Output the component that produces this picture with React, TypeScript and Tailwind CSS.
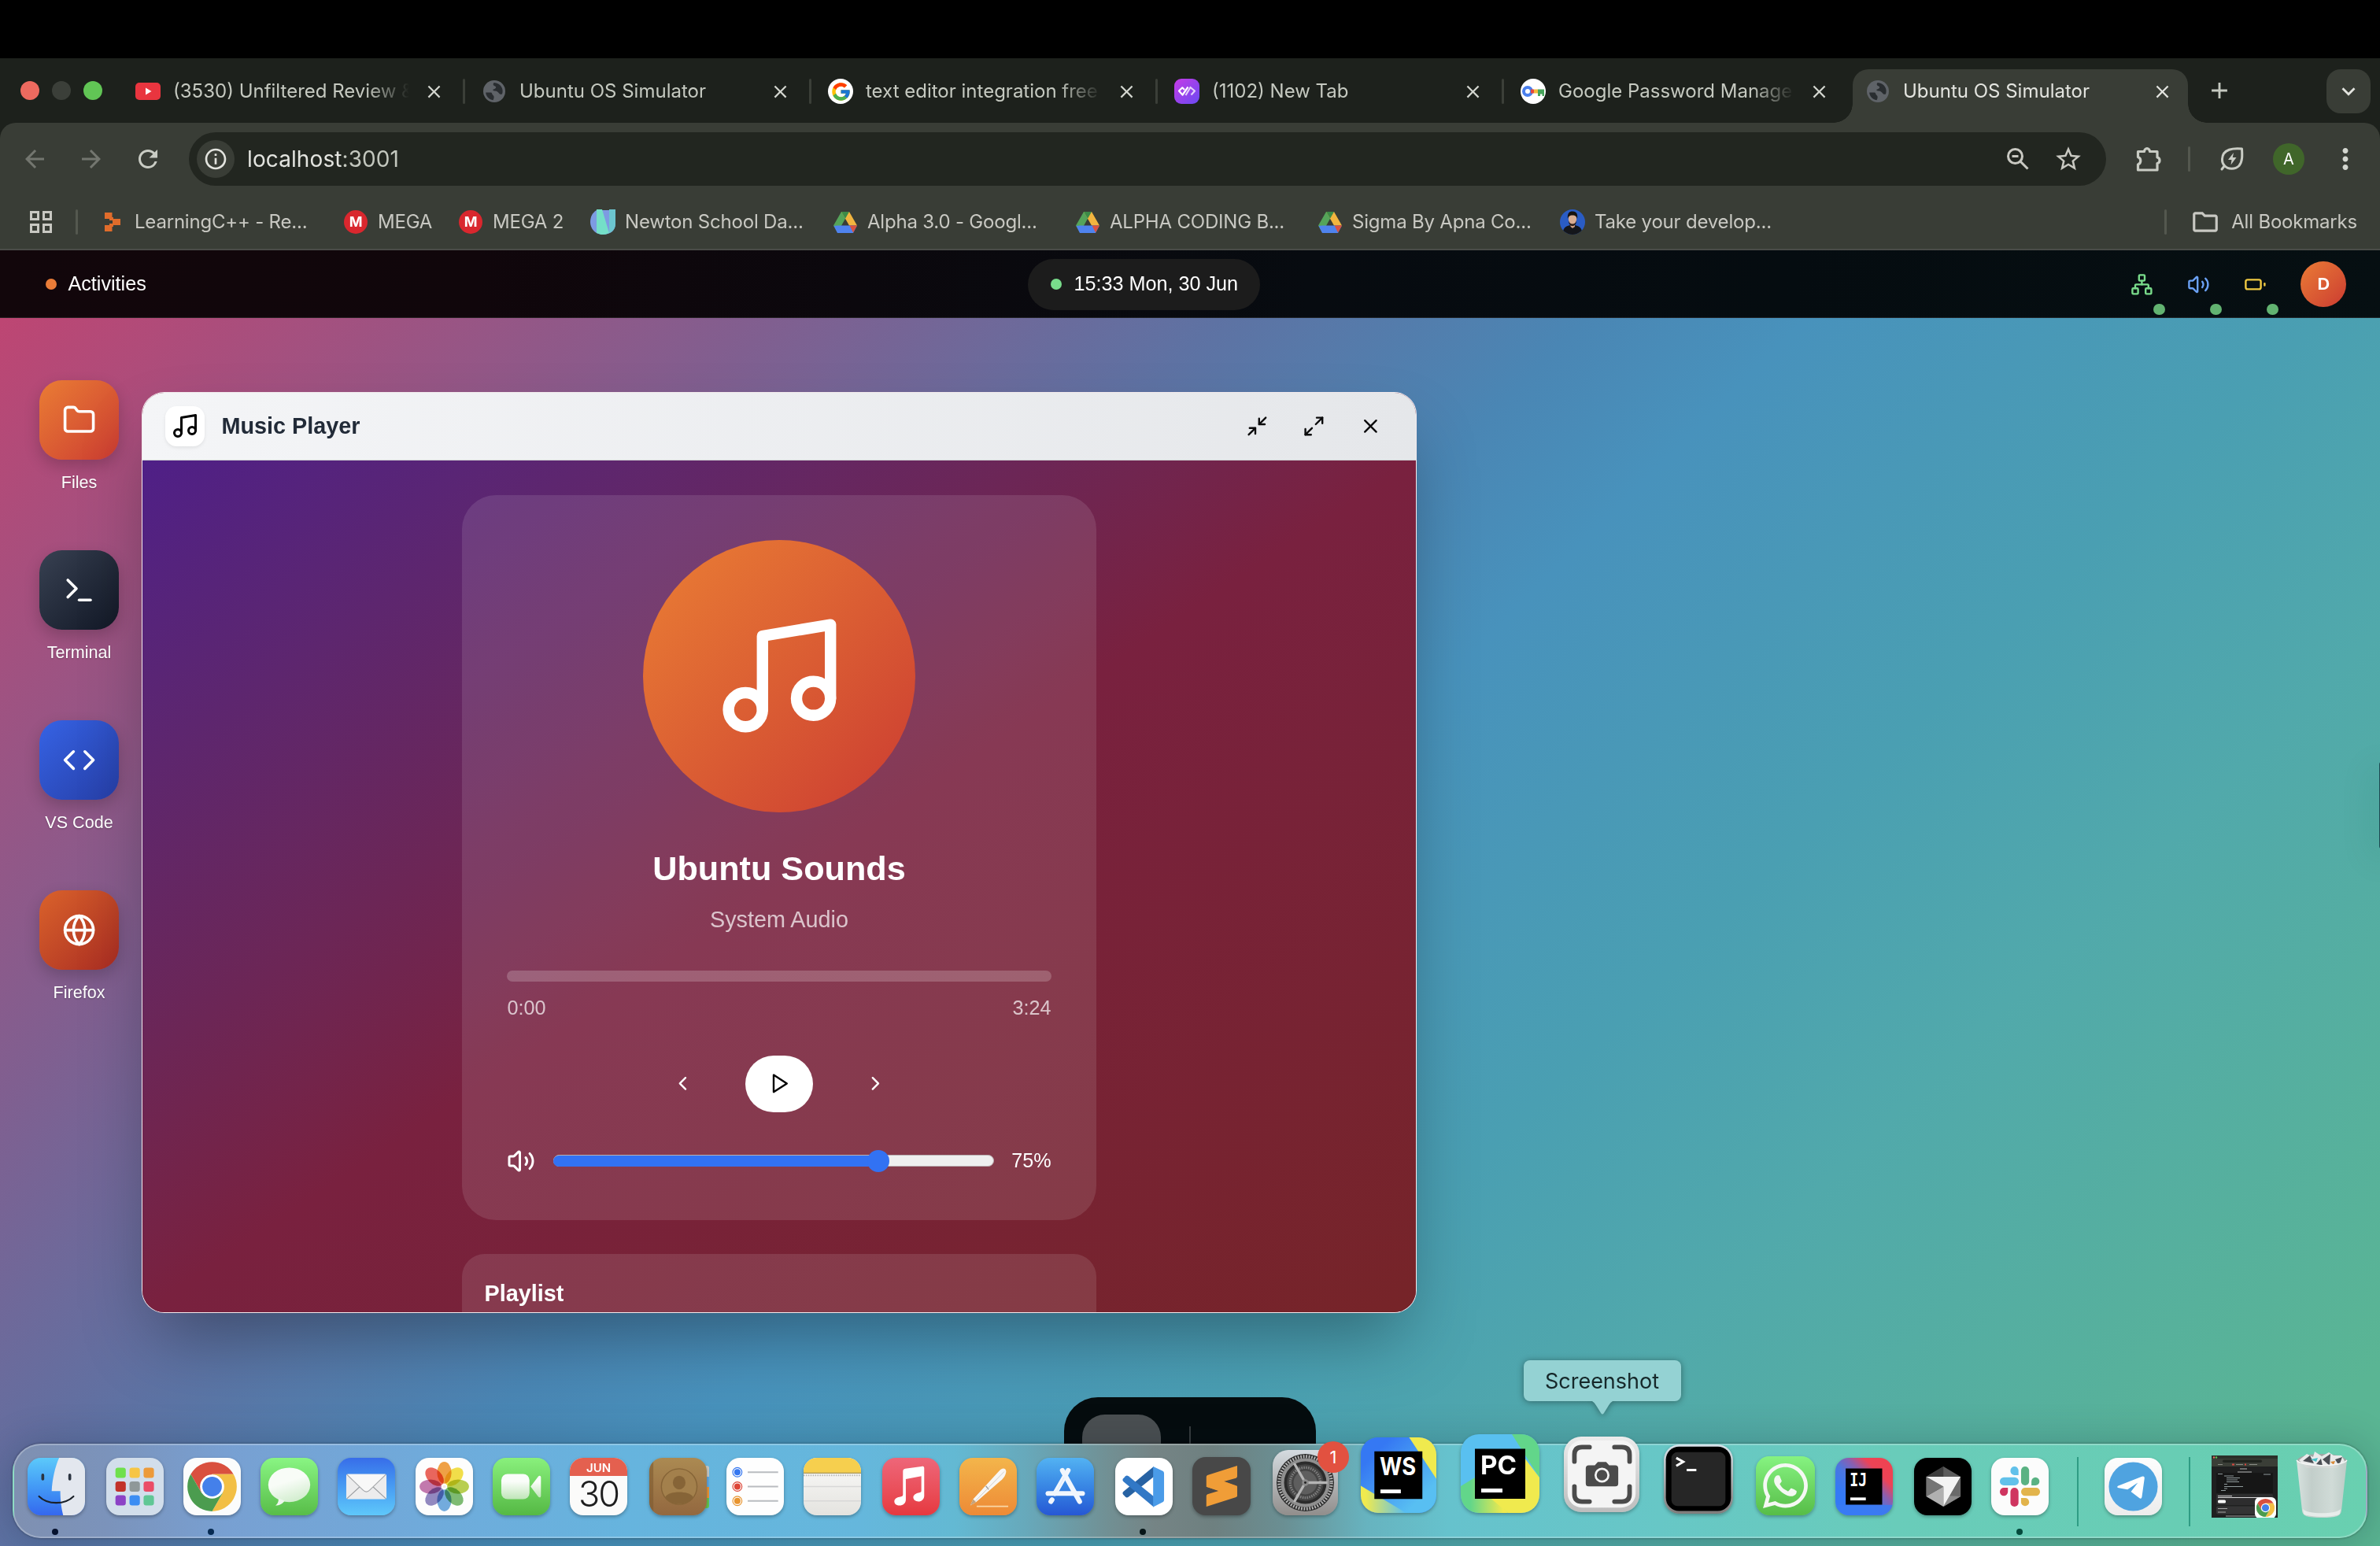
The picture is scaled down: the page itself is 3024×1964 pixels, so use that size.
import React from "react";
import {
  Code,
  Folder,
  Globe,
  Maximize2,
  Minimize2,
  Music,
  Network,
  Terminal,
  Volume2,
  X,
} from "lucide-react";
import { FcGoogle } from "react-icons/fc";
import { FaWhatsapp } from "react-icons/fa";
import {
  MdAdd,
  MdArrowBack,
  MdArrowForward,
  MdClose,
  MdExpandMore,
  MdMoreVert,
  MdOutlineFolder,
  MdOutlineInfo,
  MdRefresh,
  MdStarBorder,
  MdZoomOut,
} from "react-icons/md";

type Kids = { children?: React.ReactNode };

/* ---------- Browser favicons ---------- */

const YouTubeIcon = () => (
  <svg width="32" height="22" viewBox="0 0 32 22">
    <rect width="32" height="22" rx="5" fill="#e9353f" />
    <path d="M13 6.5 L20.5 11 L13 15.5 Z" fill="#fff" />
  </svg>
);

const WorldIcon = () => (
  <svg width="28" height="28" viewBox="0 0 28 28">
    <circle cx="14" cy="14" r="14" fill="#5f6368" />
    <path
      d="M3.2 15.5 L9.5 15.5 C11.5 15.5 11 18 12.5 19 C14 20 14 22.5 12.5 25.2 C7 24.5 3.4 20 3.2 15.5 Z M13.5 3 C12 5 12.5 6.5 15 7.5 C17.5 8.5 15.5 11 13 11.5 C11.5 12 12.5 13.5 15 13.5 C18 13.5 19 15.5 20.5 17 C21.5 18 23 18 24 17.5 C26.500 11 22 3.500 13.500 3 Z"
      fill="#23272a"
      opacity="0.9"
    />
  </svg>
);

const GoogleIcon = () => (
  <span className="flex size-[32px] items-center justify-center rounded-full bg-white">
    <FcGoogle size={27} />
  </span>
);

const DailyIcon = () => (
  <svg width="32" height="32" viewBox="0 0 32 32">
    <defs>
      <linearGradient id="daily" x1="0" y1="0" x2="1" y2="1">
        <stop offset="0" stopColor="#c63be6" />
        <stop offset="1" stopColor="#6a4af2" />
      </linearGradient>
    </defs>
    <rect width="32" height="32" rx="9" fill="url(#daily)" />
    <path d="M17.500 10.500 L10.500 20.500 L6 15.500 L10.300 11.300 L13 14" fill="none" stroke="#fff" strokeWidth="2.200" strokeLinejoin="round" />
    <path d="M14.500 21 L20.500 11 L26 15.500 L21.500 20.500" fill="none" stroke="#fff" strokeOpacity=".75" strokeWidth="2.200" strokeLinejoin="round" />
  </svg>
);

const KeyIcon = () => (
  <svg width="32" height="32" viewBox="0 0 32 32">
    <circle cx="16" cy="16" r="16" fill="#fff" />
    <circle cx="9" cy="16" r="5" fill="none" stroke="#4a80ee" strokeWidth="4" />
    <rect x="13" y="13.500" width="4" height="5" fill="#e5483b" />
    <rect x="17" y="13.500" width="5" height="5" fill="#f3b93c" />
    <path d="M22 13.500 H30 V22 H27.500 V19.500 H25 V22 H22 Z" fill="#46a45a" />
  </svg>
);

const DriveIcon = () => (
  <svg width="30" height="27" viewBox="0 0 30 27">
    <path d="M10 0 H20 L15 8.800 L5.200 26.400 L0 17.600 Z" fill="#55a45a" />
    <path d="M10 0 H20 L30 17.600 H20 Z" fill="#f2b53f" />
    <path d="M5.200 17.600 H24.800 L29.700 18 L25 27 H5 L0.500 18 Z" fill="#4f83ee" />
    <path d="M20.500 17.600 H30 L25 26.500 Z" fill="#dc5140" />
    <path d="M10 0 H20 L15 8.800 Z" fill="#3c8a47" />
  </svg>
);

const LearnIcon = () => (
  <svg width="20" height="24" viewBox="0 0 20 24" fill="#e06c2b">
    <rect x="0" y="0" width="9.500" height="8" />
    <rect x="10" y="8" width="10" height="8" />
    <rect x="0" y="16" width="9.500" height="8" />
    <rect x="6" y="6" width="5" height="4" />
    <rect x="6" y="14" width="5" height="4" />
  </svg>
);

const MegaIcon = () => (
  <span className="flex size-[30px] items-center justify-center rounded-full bg-[#d9272e] font-['Inter'] text-[18px] leading-none font-bold text-white">
    M
  </span>
);

const NewtonIcon = () => (
  <svg width="32" height="32" viewBox="0 0 32 32">
    <path d="M8 1 H32 V18 C32 27 25 32 16 32 C7 32 0 25 0 16 C0 9 3 4 8 1 Z" fill="#7d9be2" />
    <path d="M8 0 H15 L24 30 C21 31 19 32 16 32 C13 32 11 31 8 30 Z" fill="#74dfc8" />
    <path d="M24 0 H32 V18 C32 24 29 28 24 30 Z" fill="#6cc5cf" />
  </svg>
);

const PersonIcon = () => (
  <svg width="32" height="32" viewBox="0 0 32 32">
    <defs>
      <clipPath id="person">
        <circle cx="16" cy="16" r="16" />
      </clipPath>
    </defs>
    <g clipPath="url(#person)">
      <rect width="32" height="32" fill="#2a5cc4" />
      <path d="M3 32 C4 22 9 20 16 20 C23 20 28 22 29 32 Z" fill="#14161b" />
      <path d="M13.500 17 H19 V22 L16 24 L13.500 22 Z" fill="#c99b80" />
      <ellipse cx="16" cy="12" rx="5.200" ry="7" fill="#d9ad92" />
      <path d="M10 12 C9 4 13 2 16.500 2.500 C21 2.500 23 6 22 12 C21 9 20 7.500 16 7.500 C12 7.500 11 9 10 12 Z" fill="#17120f" />
      <path d="M11 14 C12 20 20 20 21 14 C21 20 18 21 16 21 C14 21 11 20 11 14 Z" fill="#2b1d17" />
    </g>
  </svg>
);

/* ---------- Browser chrome ---------- */

function Tab({ icon, title, fade, divider = true }: { icon: React.ReactNode; title: string; fade?: boolean; divider?: boolean }) {
  return (
    <div className="flex h-[56px] w-[440px] shrink-0 items-center pl-[21px]">
      <span className="flex w-[32px] shrink-0 justify-center">{icon}</span>
      <span
        className={
          fade
            ? "ml-[16px] w-[301px] leading-[32px] whitespace-nowrap [mask-image:linear-gradient(to_right,black_245px,transparent_300px)]"
            : "ml-[16px] w-[301px] leading-[32px] whitespace-nowrap"
        }
      >
        {title}
      </span>
      <MdClose size={27} className="ml-[17px] shrink-0 text-[#d3d6cf]" />
      {divider && <span className="ml-auto h-[32px] w-[3px] rounded-full bg-[#3b3f38]" />}
    </div>
  );
}

function TabStrip() {
  return (
    <div className="flex h-[82px] bg-[#1d211c] pt-[14px] font-['Inter',sans-serif] text-[24px] leading-none text-[#c5c9c0]">
      <div className="flex h-[54px] w-[151px] shrink-0 items-center gap-[16px] pl-[26px]">
        <span className="size-[24px] rounded-full bg-[#ed6a5f]" />
        <span className="size-[24px] rounded-full bg-[#3b3f39]" />
        <span className="size-[24px] rounded-full bg-[#61c555]" />
      </div>
      <Tab icon={<YouTubeIcon />} title="(3530) Unfiltered Review &amp;" fade />
      <Tab icon={<WorldIcon />} title="Ubuntu OS Simulator" />
      <Tab icon={<GoogleIcon />} title="text editor integration free" fade />
      <Tab icon={<DailyIcon />} title="(1102) New Tab" />
      <Tab icon={<KeyIcon />} title="Google Password Manager" fade divider={false} />
      <div className="relative ml-[3px] flex h-[68px] w-[426px] shrink-0 items-center rounded-t-[20px] bg-[#393d36] pb-[12px] pl-[18px] text-[#e3e4df]">
        <span className="absolute bottom-0 -left-[24px] size-[24px] bg-[radial-gradient(circle_at_0_0,transparent_23.500px,#393d36_24px)]" />
        <span className="absolute -right-[24px] bottom-0 size-[24px] bg-[radial-gradient(circle_at_100%_0,transparent_23.500px,#393d36_24px)]" />
        <WorldIcon />
        <span className="ml-[18px] w-[301px] leading-[32px]">Ubuntu OS Simulator</span>
        <MdClose size={27} className="ml-[15px]" />
      </div>
      <div className="flex h-[54px] items-center pl-[23px] text-[#c5c9c0]">
        <MdAdd size={34} />
      </div>
      <div className="mr-[12px] ml-auto flex size-[56px] items-center justify-center rounded-[18px] bg-[#393d36] text-[#e3e4df]">
        <MdExpandMore size={34} />
      </div>
    </div>
  );
}

function Toolbar() {
  return (
    <div className="flex h-[92px] items-center text-[#c5c9c0]">
      <div className="flex w-[240px] shrink-0 items-center gap-[36px] pl-[26px]">
        <MdArrowBack size={36} className="text-[#73766f]" />
        <MdArrowForward size={36} className="text-[#73766f]" />
        <MdRefresh size={36} className="text-[#c9ccc4]" />
      </div>
      <div className="flex h-[68px] w-[2436px] shrink-0 items-center rounded-full bg-[#222620] pr-[29px] pl-[10px] font-['Inter',sans-serif] text-[28px] leading-none text-[#e3e4df]">
        <span className="flex size-[48px] items-center justify-center rounded-full bg-[#393d36]">
          <MdOutlineInfo size={32} />
        </span>
        <span className="ml-[16px] tracking-[0.100px]">
          localhost<span className="text-[#c3c7be]">:3001</span>
        </span>
        <svg className="ml-auto" width="30" height="30" viewBox="0 0 30 30" fill="none" stroke="#c9c9c2" strokeWidth="3">
          <circle cx="11.500" cy="11.500" r="9" />
          <path d="M18 18 L27.500 27.500 M7.500 11.500 H15.500" />
        </svg>
        <MdStarBorder size={38} className="ml-[30px] text-[#c9c9c2]" />
      </div>
      <svg className="ml-[37px]" width="34" height="34" viewBox="0 0 34 34" fill="none" stroke="#c9ccc4" strokeWidth="3.200" strokeLinejoin="round">
        <path d="M3.500 7.500 H11.500 A3.500 3.800 0 0 1 18.500 7.500 H28 V15 A3.600 3.800 0 0 1 28 22.500 V31 H3.500 V24 A4.800 5 0 0 0 3.500 14.500 Z" />
      </svg>
      <span className="ml-[33px] h-[32px] w-[3px] rounded-full bg-[#54584f]" />
      <svg className="ml-[37px]" width="32" height="32" viewBox="0 0 32 32" fill="none" stroke="#c9ccc4" strokeWidth="3" strokeLinejoin="round" strokeLinecap="round">
        <path d="M28.500 3 C18 2 4 3 3.500 16 C3.300 19.500 4.500 22.500 6.500 24.500 C11 29.500 20 29.500 25 24.500 C29.500 19 29 11 28.500 3 Z M6.500 24.500 L3 29" />
        <path d="M18 8 L11 17 H15.500 L14.500 23.500 L21.500 14 H16.800 Z" fill="#c9ccc4" stroke="none" />
      </svg>
      <span className="ml-[36px] flex size-[40px] items-center justify-center rounded-full bg-[#40662a] font-['Inter'] text-[20px] leading-none text-white">
        A
      </span>
      <MdMoreVert size={42} className="ml-[31px] text-[#d3d6cf]" />
    </div>
  );
}

function Bookmark({ icon, label, width }: { icon: React.ReactNode; label: string; width: string }) {
  return (
    <div className={`flex shrink-0 items-center gap-[12px] whitespace-nowrap ${width}`}>
      <span className="flex w-[32px] justify-center">{icon}</span>
      {label}
    </div>
  );
}

function BookmarksBar() {
  return (
    <div className="flex h-[70px] items-center border-b-2 border-[#4a4c48] font-['Inter',sans-serif] text-[24px] leading-none tracking-[-0.200px] text-[#c8c8c2]">
      <svg className="ml-[38px]" width="28" height="28" viewBox="0 0 28 28" fill="none" stroke="#c8c8c2" strokeWidth="3">
        <rect x="1.500" y="1.500" width="9" height="9" />
        <rect x="17.500" y="1.500" width="9" height="9" />
        <rect x="1.500" y="17.500" width="9" height="9" />
        <rect x="17.500" y="17.500" width="9" height="9" />
      </svg>
      <span className="mr-[28px] ml-[30px] h-[32px] w-[3px] rounded-full bg-[#54584f]" />
      <Bookmark icon={<LearnIcon />} label="LearningC++ - Re..." width="w-[309px]" />
      <Bookmark icon={<MegaIcon />} label="MEGA" width="w-[146px]" />
      <Bookmark icon={<MegaIcon />} label="MEGA 2" width="w-[168px]" />
      <Bookmark icon={<NewtonIcon />} label="Newton School Da..." width="w-[308px]" />
      <Bookmark icon={<DriveIcon />} label="Alpha 3.0 - Googl..." width="w-[308px]" />
      <Bookmark icon={<DriveIcon />} label="ALPHA CODING B..." width="w-[308px]" />
      <Bookmark icon={<DriveIcon />} label="Sigma By Apna Co..." width="w-[308px]" />
      <Bookmark icon={<PersonIcon />} label="Take your develop..." width="w-[308px]" />
      <span className="ml-auto h-[32px] w-[3px] rounded-full bg-[#54584f]" />
      <MdOutlineFolder size={38} className="ml-[30px]" />
      <span className="mr-[29px] ml-[14px]">All Bookmarks</span>
    </div>
  );
}

/* ---------- Simulated desktop ---------- */

function StatusIcon({ children }: Kids) {
  return (
    <span className="relative flex size-[28.800px] items-center justify-center">
      {children}
      <span className="absolute top-[39px] left-[29px] size-[14.400px] rounded-full bg-[#62b371]" />
    </span>
  );
}

function TopBar() {
  return (
    <div className="flex h-[86px] items-center border-b border-white/10 bg-[linear-gradient(90deg,#12060b_0%,#10060b_20%,#0b080d_36%,#070b10_55%,#050c10_75%,#060f12_100%)] pt-px text-[25.200px] leading-none text-white">
      <div className="flex w-[1306px] shrink-0 items-center gap-[14px] pl-[58px]">
        <span className="size-[14.400px] rounded-full bg-[#ea7c38]" />
        Activities
      </div>
      <div className="flex h-[65px] w-[295px] shrink-0 items-center gap-[15px] rounded-full bg-[#1c1c1c] pl-[29px] whitespace-nowrap">
        <span className="size-[14.400px] shrink-0 rounded-full bg-[#79dc8b]" />
        15:33 Mon, 30 Jun
      </div>
      <div className="mr-[43px] ml-auto flex items-center gap-[43.200px]">
        <StatusIcon>
          <Network size={28.8} className="text-[#79dc8b]" />
        </StatusIcon>
        <StatusIcon>
          <Volume2 size={28.8} className="text-[#6ba1f4]" />
        </StatusIcon>
        <StatusIcon>
          <svg width="28.800" height="28.800" viewBox="0 0 24 24" fill="none" stroke="#f0ca42" strokeWidth="2" strokeLinecap="round" strokeLinejoin="round">
            <rect x="2" y="7" width="16" height="10" rx="2" />
            <path d="M22 11v2" />
          </svg>
        </StatusIcon>
        <span className="flex size-[57.600px] items-center justify-center rounded-full bg-linear-to-br from-[#ea7b35] to-[#cb3a31] text-[21.600px] font-bold">
          D
        </span>
      </div>
    </div>
  );
}

function DesktopIcon({ tile, label, children }: Kids & { tile: string; label: string }) {
  return (
    <div className="flex h-[216px] w-[144px] flex-col items-center">
      <div className={`flex size-[100.800px] items-center justify-center rounded-[28.800px] shadow-[0_8px_20px_rgba(0,0,0,0.2)] ${tile}`}>
        {children}
      </div>
      <span className="mt-[17px] text-[21.600px] leading-[24px] text-white [text-shadow:0_1px_2px_rgba(0,0,0,0.3)]">{label}</span>
    </div>
  );
}

function MusicWindow() {
  return (
    <div className="absolute top-[180px] left-[180px] flex h-[1170px] w-[1620px] flex-col overflow-hidden rounded-[28.800px] border border-white/90 bg-[#79213f] shadow-[0_45px_90px_-18px_rgba(0,0,0,0.34)]">
      <div className="flex h-[86px] shrink-0 items-center border-b border-[#cfd0d2] bg-linear-to-r from-[#f4f5f7] to-[#e5e7ea] pr-[43px] pl-[29px]">
        <span className="flex size-[50.400px] items-center justify-center rounded-[14.400px] bg-white shadow-[0_2px_4px_rgba(0,0,0,0.08)]">
          <Music size={36} className="text-black" />
        </span>
        <span className="ml-[21px] text-[28.800px] leading-none font-bold text-[#222b38]">Music Player</span>
        <div className="ml-auto flex items-center gap-[43.200px] text-[#0b0b0c]">
          <Minimize2 size={28.8} />
          <Maximize2 size={28.8} />
          <X size={28.8} />
        </div>
      </div>
      <div className="flex min-h-0 flex-1 flex-col items-center gap-[43.200px] overflow-hidden bg-linear-to-br from-[#4f1f87] via-[#79213f] to-[#762428] pt-[44px]">
        <div className="flex h-[921px] w-[806.400px] shrink-0 flex-col items-center rounded-[43.200px] bg-white/11 px-[57.600px] pt-[57px] text-white">
          <div className="flex size-[345.600px] shrink-0 items-center justify-center rounded-full bg-linear-to-br from-[#ea7e34] to-[#cb3a31]">
            <Music size={172.8} />
          </div>
          <div className="mt-[43px] text-[43.200px] leading-[57.600px] font-bold">Ubuntu Sounds</div>
          <div className="mt-[14.400px] text-[28.800px] leading-[43.200px] text-white/70">System Audio</div>
          <div className="mt-[43px] h-[14.400px] w-full rounded-full bg-white/20" />
          <div className="mt-[14.400px] flex w-full justify-between text-[25.200px] leading-[36px] text-white/70">
            <span>0:00</span>
            <span>3:24</span>
          </div>
          <div className="mt-[43px] flex h-[72px] items-center gap-[65px]">
            <svg width="28.800" height="28.800" viewBox="0 0 24 24" fill="none" stroke="currentColor" strokeWidth="2" strokeLinecap="round" strokeLinejoin="round">
              <path d="m15 18-6-6 6-6" />
            </svg>
            <span className="flex h-[72px] w-[86.400px] items-center justify-center rounded-full bg-white pl-[2px]">
              <svg width="28.800" height="28.800" viewBox="0 0 24 24" fill="none" stroke="#000" strokeWidth="2" strokeLinecap="round" strokeLinejoin="round">
                <path d="M5 3 L19 12 L5 21 Z" />
              </svg>
            </span>
            <svg width="28.800" height="28.800" viewBox="0 0 24 24" fill="none" stroke="currentColor" strokeWidth="2" strokeLinecap="round" strokeLinejoin="round">
              <path d="m9 18 6-6-6-6" />
            </svg>
          </div>
          <div className="mt-[44px] flex h-[36px] w-full items-center text-[25.200px] leading-none">
            <Volume2 size={36} className="shrink-0" />
            <div className="ml-[23px] flex h-[28px] w-[560px] shrink-0 items-center">
              <div className="flex h-[15px] w-full items-center rounded-full border border-[#b9b0b2] bg-[#efefef]">
                <div className="relative -ml-px flex h-[14px] w-[413px] shrink-0 items-center rounded-full bg-[#3272f3]">
                  <span className="absolute -right-[14px] size-[28px] rounded-full bg-[#3272f3]" />
                </div>
              </div>
            </div>
            <span className="ml-auto">75%</span>
          </div>
        </div>
        <div className="h-[400px] w-[806.400px] shrink-0 rounded-[28.800px] bg-white/11 p-[28.800px] text-[28.800px] leading-[43.200px] font-bold text-white">
          Playlist
        </div>
      </div>
    </div>
  );
}

function Desktop() {
  return (
    <div className="relative flex-1 overflow-hidden bg-[linear-gradient(135deg,#c04472_0%,#bd4673_2%,#805f90_23%,#5e72a3_35%,#4a86b4_45%,#4892bc_51%,#4a9fb2_65%,#51a9ab_75%,#5ab594_95%,#5ab592_100%)] font-['Liberation_Sans',Arial,sans-serif]">
      <TopBar />
      <div className="mt-[79px] ml-[28.500px] flex flex-col">
        <DesktopIcon tile="bg-linear-to-br from-[#ea7c34] to-[#cb3a31]" label="Files">
          <Folder size={43.2} className="text-white" />
        </DesktopIcon>
        <DesktopIcon tile="bg-linear-to-br from-[#384152] to-[#121826]" label="Terminal">
          <Terminal size={43.2} className="text-white" />
        </DesktopIcon>
        <DesktopIcon tile="bg-linear-to-br from-[#3663e5] to-[#263ea6]" label="VS Code">
          <Code size={43.2} className="text-white" />
        </DesktopIcon>
        <DesktopIcon tile="bg-linear-to-br from-[#da622b] to-[#a92b22]" label="Firefox">
          <Globe size={43.2} className="text-white" />
        </DesktopIcon>
      </div>
      <MusicWindow />
      <div className="absolute top-[650px] -right-[2px] h-[110px] w-[3px] rounded-l-full bg-[#1d4a52] shadow-[0_10px_40px_4px_rgba(20,90,70,0.22)]" />
      <div className="absolute bottom-[64px] left-[1352px] flex h-[125px] w-[320px] items-start overflow-hidden rounded-t-[43px] bg-[#050c0e] pt-[22px] pl-[23px]">
        <span className="h-[100px] w-[100px] rounded-[28.800px] bg-[#4b5052]" />
        <span className="mt-[15px] ml-[36px] h-[72px] w-[2px] bg-white/20" />
      </div>
    </div>
  );
}

/* ---------- macOS dock ---------- */

function App100({ box, children }: Kids & { box: string }) {
  return (
    <div className={`relative shrink-0 overflow-hidden shadow-[0_2px_4px_rgba(0,0,0,0.3)] ${box}`}>
      <svg className="block size-full" viewBox="0 0 100 100">
        {children}
      </svg>
    </div>
  );
}

function ChromeDisc() {
  return (
    <>
      <path d="M12.800 28.500 A43 43 0 0 1 87.200 28.500 H50 L31.400 60.750 Z" fill="#d9503f" />
      <path d="M87.200 28.500 A43 43 0 0 1 50 93 L68.600 60.750 L50 28.500 Z" fill="#f2bf45" />
      <path d="M50 93 A43 43 0 0 1 12.800 28.500 L31.400 60.750 H68.600 Z" fill="#4b9c4f" />
      <circle cx="50" cy="50" r="21" fill="#fff" />
      <circle cx="50" cy="50" r="17" fill="#4480ea" />
    </>
  );
}

const petals = [
  ["#f09a36", 0],
  ["#f2de3a", 45],
  ["#b4cc42", 90],
  ["#74b868", 135],
  ["#68a6dd", 180],
  ["#8a80bd", 225],
  ["#bf6fa8", 270],
  ["#ea5a50", 315],
] as const;

const launchpad = ["#6fe04c", "#f6c544", "#ec9a3a", "#c2322a", "#8f9899", "#ea4c67", "#8c42c6", "#3b8df3", "#60c795"];

function Dock() {
  return (
    <div className="absolute top-[1834px] left-[16px] flex h-[120px] w-[2992px] items-end rounded-[36px] border-2 border-white/25 bg-[linear-gradient(90deg,#7f90b1_0%,#7b93bb_4%,#78a0d2_9%,#6fabdb_18%,#66b4de_26%,#65b7dc_36%,#63b9d3_40%,#67a9bb_43%,#719094_46.500%,#758485_48.500%,#6e8080_51%,#6a8f93_54%,#67b3bf_57.500%,#66c2cd_61%,#67c7c6_70%,#69ccba_80%,#68cdb4_92%,#69d0b0_100%)] pb-[27px] shadow-[0_0_3px_rgba(0,0,0,0.45),0_4px_50px_6px_rgba(0,20,40,0.2)]">
      {/* Finder */}
      <App100 box="ml-[17px] size-[73px] rounded-[17px] bg-linear-to-b from-[#5cc9fa] to-[#3567ee]">
        <path d="M55 0 C48 15 43 38 42 58 H57 C57 75 59 88 62 100 H100 V0 Z" fill="#e3e7ee" />
        <path d="M26.500 30 V37 M73.500 30 V37" stroke="#2b3440" strokeWidth="5" strokeLinecap="round" />
        <path d="M20 67 C35 82 65 82 80 67" fill="none" stroke="#1b2129" strokeWidth="3" strokeLinecap="round" />
      </App100>
      {/* Launchpad */}
      <App100 box="ml-[27px] size-[73px] rounded-[17px] bg-[#d2deeb]">
        {launchpad.map((c, i) => (
          <rect key={c} x={16 + (i % 3) * 24.5} y={17 + Math.floor(i / 3) * 24} width="18" height="18" rx="4.500" fill={c} />
        ))}
      </App100>
      {/* Chrome */}
      <App100 box="ml-[25px] size-[73px] rounded-[17px] bg-[#fbfcfc]">
        <ChromeDisc />
      </App100>
      {/* Messages */}
      <App100 box="ml-[25px] size-[73px] rounded-[17px] bg-linear-to-b from-[#89f583] to-[#58bd48]">
        <defs>
          <linearGradient id="bubble" x1="0.300" y1="0" x2="0.700" y2="1">
            <stop offset="0.400" stopColor="#f8fcf7" />
            <stop offset="1" stopColor="#cfeccb" />
          </linearGradient>
        </defs>
        <ellipse cx="50" cy="47" rx="36.500" ry="30" fill="url(#bubble)" />
        <path d="M31 70 C32 76 30 80 26 83 C33 83 38 80 42 75 Z" fill="#eef7ed" />
      </App100>
      {/* Mail */}
      <App100 box="ml-[25px] size-[73px] rounded-[17px] bg-linear-to-b from-[#386de9] to-[#5fc8fa]">
        <rect x="15" y="28" width="70" height="44" rx="3" fill="#ececed" />
        <path d="M16 71 L40 49 M84 71 L60 49" stroke="#9b9ea2" strokeWidth="1.600" />
        <path d="M16 29 L44 56 C48 60 52 60 56 56 L84 29" fill="#f8f8f8" stroke="#a5a7aa" strokeWidth="1.600" />
      </App100>
      {/* Photos */}
      <App100 box="ml-[26px] size-[73px] rounded-[17px] bg-[#fdfdfd]">
        {petals.map(([c, a]) => (
          <ellipse key={a} cx="50" cy="26" rx="12.500" ry="19" fill={c} opacity="0.92" transform={`rotate(${a} 50 50)`} className="mix-blend-multiply" />
        ))}
        <circle cx="50" cy="50" r="2.500" fill="#f4efe6" />
      </App100>
      {/* FaceTime */}
      <App100 box="ml-[25px] size-[73px] rounded-[17px] bg-linear-to-b from-[#89f07c] to-[#55b944]">
        <defs>
          <linearGradient id="cam" x1="0" y1="0" x2="0" y2="1">
            <stop offset="0.300" stopColor="#fafdf9" />
            <stop offset="1" stopColor="#bfe5b8" />
          </linearGradient>
        </defs>
        <rect x="15" y="28" width="49" height="44" rx="11" fill="url(#cam)" />
        <path d="M66 50 L79 33 C81 30 84 31 84 34 V66 C84 69 81 70 79 67 Z" fill="url(#cam)" />
      </App100>
      {/* Calendar */}
      <div className="ml-[25px] flex size-[73px] shrink-0 flex-col items-center overflow-hidden rounded-[17px] bg-[#fbfbfa] font-['Inter',sans-serif] shadow-[0_2px_4px_rgba(0,0,0,0.3)]">
        <span className="flex h-[23px] w-full items-center justify-center bg-[#e4604f] pt-px text-[15px] leading-none font-semibold text-white">JUN</span>
        <span className="text-[45px] leading-[46px] font-light tracking-[-2px] text-[#1e1e1e]">30</span>
      </div>
      {/* Contacts */}
      <div className="relative ml-[28px] flex shrink-0">
        <div className="absolute top-[10px] -right-[3px] flex h-[54px] w-[8px] flex-col overflow-hidden rounded-[3px]">
          <span className="flex-1 bg-[#c9c9c4]" />
          <span className="flex-1 bg-[#5fa9e4]" />
          <span className="flex-1 bg-[#ea9435]" />
          <span className="flex-1 bg-[#65c64f]" />
        </div>
        <App100 box="size-[73px] rounded-[17px] bg-linear-to-b from-[#ab8a52] to-[#93683f]">
          <rect width="7" height="100" fill="#7d5a31" opacity="0.6" />
          <circle cx="52" cy="50" r="31" fill="#a3804c" stroke="#866437" strokeWidth="2" />
          <ellipse cx="52" cy="43" rx="11" ry="12" fill="#866437" />
          <path d="M28 68 C34 57 70 57 76 68 C68 84 36 84 28 68 Z" fill="#866437" />
        </App100>
      </div>
      {/* Reminders */}
      <App100 box="ml-[25px] size-[73px] rounded-[17px] bg-[#fefefe]">
        {["#3577f0", "#dd4638", "#e8942f"].map((c, i) => (
          <g key={c}>
            <circle cx="19" cy={25 + i * 25} r="5.500" fill={c} />
            <circle cx="19" cy={25 + i * 25} r="8" fill="none" stroke={c} strokeWidth="1.600" />
            <path d={`M37 ${25 + i * 25} H90`} stroke="#b9bcc0" strokeWidth="2.500" />
          </g>
        ))}
      </App100>
      {/* Notes */}
      <App100 box="ml-[25px] size-[73px] rounded-[17px] bg-linear-to-b from-[#fbfbfa] to-[#e4e3df]">
        <rect width="100" height="26" fill="#f6cf4e" />
        <path d="M0 26.500 H100" stroke="#a89657" strokeWidth="1.500" />
        <path d="M0 30.500 H100" stroke="#b8b8b5" strokeWidth="2.500" strokeDasharray="2 2" />
        <path d="M0 50 H100 M0 75 H100" stroke="#d8d8d7" strokeWidth="2" />
      </App100>
      {/* Music */}
      <App100 box="ml-[27px] size-[73px] rounded-[17px] bg-linear-to-b from-[#ee6679] to-[#e6383f]">
        <path d="M36 24 C36 21 37 20 40 19 L68 15 C71 14.500 73 15 73 18 V66 C73 72 68 76 63 76 C58 76 54 73 54 69 C54 65 58 62 63 61 C67 60 68 60 68 57 V32 L41 37 V73 C41 79 36 83 30 83 C25 83 21 80 21 76 C21 72 24 69 30 68 C34 67 36 67 36 64 Z" fill="#fff" />
      </App100>
      {/* Pages */}
      <App100 box="ml-[25px] size-[73px] rounded-[17px] bg-linear-to-b from-[#f3b54b] to-[#ed8a36]">
        <path d="M30 84.500 H85" stroke="#f9d7a6" strokeWidth="2.500" />
        <path d="M19 83 L24 72 L70 22 C75 16 83 18 81 26 C80 30 78 34 74 38 L29 77 Z" fill="#f8f6f3" />
        <path d="M19 83 L24 72 L29 77 Z" fill="#c4a27b" />
        <path d="M46 49 L51 55" stroke="#9c9c9c" strokeWidth="2" />
        <path d="M28 75 L78 24" stroke="#c9c7c4" strokeWidth="1.200" />
      </App100>
      {/* App Store */}
      <App100 box="ml-[25px] size-[73px] rounded-[17px] bg-linear-to-b from-[#53b2f2] to-[#2757d4]">
        <g stroke="#f1f6fd" strokeWidth="8.500" strokeLinecap="round">
          <path d="M55 22 L32 62" />
          <path d="M45 22 L75 76" />
          <path d="M20 62 H80" />
          <path d="M27 73 L25 76" />
        </g>
        <path d="M48 34 L36 57" stroke="#d6e4f8" strokeWidth="1" />
      </App100>
      {/* VS Code */}
      <App100 box="ml-[27px] size-[73px] rounded-[17px] bg-white">
        <path d="M14 59 C12.500 61 12.500 62 14 64 L18 68 C19.500 69.500 21 69.500 23 68 L67 33 V15 Z" fill="#2762a3" />
        <path d="M14 41 C12.500 39 12.500 38 14 36 L18 32 C19.500 30.500 21 30.500 23 32 L67 67 V85.500 Z" fill="#3178c6" />
        <path d="M66 15 L82 22.500 C84 23.500 85 25 85 27 V73 C85 75 84 76.500 82 77.500 L66 85.500 Z" fill="#4a9be8" />
      </App100>
      {/* Sublime Text */}
      <App100 box="ml-[25px] size-[74px] rounded-[17px] bg-[#484848]">
        <path d="M24 51 L77 68 V52 Q77 49 74 48.500 L54 41.500 Z" fill="#e18a2b" />
        <path d="M24 34 Q24 32 26 31 L77 15 V33 Q77 35 75 36 L54 42 L77 50 V66 Q77 68 75 69 L24 85 V67 Q24 65 26 64 L45 58 L24 51 Z" fill="#f09d37" />
      </App100>
      {/* System Settings */}
      <div className="relative ml-[28px] shrink-0">
        <App100 box="size-[83px] rounded-[20px] bg-linear-to-b from-[#d5dbe0] to-[#918e8c]">
          <circle cx="50" cy="50" r="44" fill="#2b2b2b" />
          <circle cx="50" cy="50" r="40" fill="none" stroke="#b3b3b3" strokeWidth="5" strokeDasharray="2.200 2" />
          <circle cx="50" cy="50" r="35" fill="none" stroke="#8f8f8f" strokeWidth="5" />
          <circle cx="50" cy="50" r="28" fill="#444" />
          <circle cx="50" cy="50" r="23" fill="none" stroke="#7c7c7c" strokeWidth="4" strokeDasharray="2 1.500" />
          <circle cx="50" cy="50" r="18" fill="#5e5e5e" />
          <path d="M50 50 H84 M50 50 L33 20.500 M50 50 L33 79.500" stroke="#b5b5b5" strokeWidth="4" />
          <circle cx="50" cy="50" r="5" fill="#8a8a8a" />
          <circle cx="50" cy="50" r="1.800" fill="#222" />
        </App100>
        <span className="absolute -top-[11px] left-[57px] flex size-[40px] items-center justify-center rounded-full bg-[#e25140] font-['Inter',sans-serif] text-[22px] leading-none text-white">
          1
        </span>
      </div>
      {/* WebStorm */}
      <App100 box="mb-[3px] ml-[29px] size-[96px] rounded-[22px] bg-[#3f83f0]">
        <defs>
          <linearGradient id="wsBlue" x1="0" y1="0" x2="1" y2="1">
            <stop offset="0.200" stopColor="#3578f3" />
            <stop offset="0.800" stopColor="#58bff2" />
          </linearGradient>
          <linearGradient id="wsLow" x1="0" y1="0" x2="1" y2="0">
            <stop offset="0.100" stopColor="#f0ea4e" />
            <stop offset="1" stopColor="#58bff2" />
          </linearGradient>
        </defs>
        <rect width="100" height="100" fill="url(#wsBlue)" />
        <path d="M64 0 H100 V55 Z" fill="#f0ea4e" />
        <path d="M0 64 L60 100 H0 Z" fill="url(#wsLow)" />
        <rect x="18" y="18.500" width="63.500" height="63" fill="#000" />
        <text x="25" y="50.500" textLength="48" lengthAdjust="spacingAndGlyphs" fontFamily="Inter" fontWeight="700" fontSize="33" fill="#fff">WS</text>
        <rect x="26" y="69" width="27" height="5" fill="#fff" />
      </App100>
      {/* PyCharm */}
      <App100 box="mb-[3px] ml-[31px] size-[100px] rounded-[23px] bg-[#59c0f0]">
        <defs>
          <linearGradient id="pcLow" x1="0" y1="0" x2="1" y2="0">
            <stop offset="0.200" stopColor="#62d68a" />
            <stop offset="0.900" stopColor="#f0ea4e" />
          </linearGradient>
        </defs>
        <path d="M65 0 H100 V55 Z" fill="#62d68a" />
        <path d="M0 66 L18 55 L60 100 H0 Z" fill="url(#pcLow)" />
        <path d="M100 55 V100 H60 L34 78 L81 30 Z" fill="#f0ea4e" />
        <rect x="18" y="18.500" width="64" height="63.500" fill="#000" />
        <text x="25" y="50.500" textLength="46" lengthAdjust="spacingAndGlyphs" fontFamily="Inter" fontWeight="700" fontSize="33" fill="#fff">PC</text>
        <rect x="26" y="69" width="27" height="5" fill="#fff" />
      </App100>
      {/* Screenshot */}
      <App100 box="mb-[4px] ml-[31px] size-[96px] rounded-[22px] bg-linear-to-b from-[#ececec] to-[#bdbdbd]">
        <rect x="5" y="5" width="90" height="89" rx="19" fill="#f4f4f4" />
        <g fill="none" stroke="#4b4b4b" strokeWidth="6" strokeLinecap="round">
          <path d="M14 33 V24 Q14 14 24 14 H34" />
          <path d="M67 14 H77 Q87 14 87 24 V33" />
          <path d="M14 66 V76 Q14 86 24 86 H34" />
          <path d="M67 86 H77 Q87 86 87 76 V66" />
        </g>
        <path d="M33 38 H41 L45 33.500 H56 L60 38 H68 Q72 38 72 42 V62 Q72 66 68 66 H33 Q29 66 29 62 V42 Q29 38 33 38 Z" fill="#4b4b4b" />
        <circle cx="50.500" cy="51" r="8.500" fill="#4b4b4b" stroke="#f4f4f4" strokeWidth="2.800" />
      </App100>
      {/* Terminal */}
      <App100 box="mb-[2px] ml-[31px] size-[88px] rounded-[20px] bg-linear-to-b from-[#d7e3ea] to-[#7f7c7b]">
        <rect x="3" y="3" width="94" height="93" rx="19" fill="#000" />
        <rect x="11" y="11" width="78" height="78" rx="9" fill="#262626" />
        <path d="M18 19.500 L28 25 L18 31" fill="none" stroke="#fff" strokeWidth="3.500" />
        <path d="M33 37 H47" stroke="#fff" strokeWidth="3.500" />
      </App100>
      {/* WhatsApp */}
      <div className="ml-[29px] flex size-[75px] shrink-0 items-center justify-center rounded-[17px] bg-linear-to-b from-[#86f381] to-[#57bd47] shadow-[0_2px_4px_rgba(0,0,0,0.3)]">
        <FaWhatsapp size={65} className="text-[#f5f8f4]" />
      </div>
      {/* IntelliJ IDEA */}
      <App100 box="ml-[26px] size-[73px] rounded-[17px] bg-[linear-gradient(45deg,#3479f6_25%,#4a76e0_45%,#8a5fb0_60%,#ee4356_75%,#f0424f_100%)]">
        <rect x="0" y="82" width="100" height="18" fill="#3a7af3" opacity="0.85" />
        <rect x="18" y="18.500" width="63.500" height="63" fill="#000" />
        <text x="25" y="49" textLength="30" lengthAdjust="spacingAndGlyphs" fontFamily="DejaVu Sans Mono" fontWeight="700" fontSize="31" fill="#fff">IJ</text>
        <rect x="26" y="69" width="27" height="5" fill="#fff" />
      </App100>
      {/* Cursor */}
      <App100 box="ml-[27px] size-[73px] rounded-[17px] bg-black">
        <path d="M51 15 L81 33 H21 Z" fill="#5c5c5c" />
        <path d="M51 15 L51 33 H21 Z" fill="#3d3d3d" />
        <path d="M21 33 V67 L51 50 Z" fill="#757575" />
        <path d="M21 67 L51 50 V85 Z" fill="#b0b0b0" />
        <path d="M81 33 V67 L51 85 Z" fill="#6a6a6a" />
        <path d="M81 67 L51 85 L62 66 Z" fill="#8c8c8c" />
        <path d="M21 33 H81 L51 85 V50 Z" fill="#f3f3f3" />
      </App100>
      {/* Slack */}
      <App100 box="ml-[25px] size-[73px] rounded-[17px] bg-[#fcfcfc]">
        <g fill="#62c1ea">
          <rect x="15" y="34" width="33" height="14" rx="7" />
          <path d="M47.500 30 H40 A7 7 0 0 1 33.500 22 A7 7 0 0 1 47.500 22 Z" />
        </g>
        <g fill="#5ab283">
          <rect x="52" y="15" width="14" height="33" rx="7" />
          <path d="M70 48 V41 A7 7 0 0 1 84 41 A7 7 0 0 1 77 48 Z" />
        </g>
        <g fill="#cf3560">
          <rect x="33.500" y="52" width="14" height="33" rx="7" />
          <path d="M29 52 V59 A7 7 0 0 1 15 59 A7 7 0 0 1 22 52 Z" />
        </g>
        <g fill="#e2b44c">
          <rect x="52" y="52" width="33" height="14" rx="7" />
          <path d="M52 70 H59 A7 7 0 0 1 66 77 A7 7 0 0 1 52 77 Z" />
        </g>
      </App100>
      <span className="-mb-[14px] ml-[36px] h-[88px] w-[2px] shrink-0 bg-[#2f9c84]" />
      {/* Telegram */}
      <App100 box="ml-[33px] size-[73px] rounded-[17px] bg-linear-to-b from-[#fdfdfd] to-[#ececec]">
        <circle cx="50" cy="50" r="42.500" fill="#4fa3e0" />
        <path d="M23 52 Q21 50 24 48.500 L65 32.500 Q70 31 69.500 36 L65 68 Q64 73 60 69.500 L46 59 L58 43 L40 55 Z" fill="#fff" />
      </App100>
      <span className="-mb-[14px] ml-[34px] h-[88px] w-[2px] shrink-0 bg-[#2f9c84]" />
      {/* Minimised browser window */}
      <svg className="-mb-[3px] ml-[27px] shrink-0" width="84" height="79" viewBox="0 0 84 79">
        <rect width="84" height="79" fill="#1f2020" />
        <rect width="84" height="4" fill="#2b302a" />
        <rect y="4" width="84" height="10" fill="#3a3e37" />
        <rect x="14" y="5.500" width="50" height="3.500" rx="1.700" fill="#20241f" />
        <circle cx="3" cy="2.500" r="1.200" fill="#ed6a5f" />
        <circle cx="6" cy="2.500" r="1.200" fill="#61c555" />
        <path d="M8 11.500 H14 M31 11.500 H40 M48 11.500 H58" stroke="#8b8f87" strokeWidth="1.200" />
        <path d="M26 11.500 H29 M42 11.500 H44" stroke="#d9473f" strokeWidth="1.800" />
        <path d="M36 17 H45 M33 21 H51" stroke="#b5b5b5" strokeWidth="1.200" />
        <rect x="6" y="22" width="72" height="26" fill="#161616" />
        <path d="M8 23.500 H14 M16 26 H28 M19 28.500 H36 M19 31 H33 M19 33.500 H35 M16 36.500 H20 M16 39.500 H40 M16 42 H20 M12 44.500 H18 M66 24 H75" stroke="#8f9a9c" strokeWidth="1" />
        <rect x="6" y="49" width="72" height="14" rx="1.500" fill="#2d2d2e" />
        <path d="M8 51.500 H26 M8 53.500 H60" stroke="#d7d7d7" strokeWidth="1.100" />
        <rect x="8" y="56.500" width="10" height="4" rx="1.500" fill="#fff" />
        <rect x="6" y="64.500" width="72" height="10" rx="2" fill="#343435" />
        <path d="M8 67.500 H20 M8 72 H18 M18 77 H60" stroke="#a5a5a5" strokeWidth="1" />
        <rect x="55" y="53" width="27" height="27" rx="6" fill="#fff" />
        <g transform="translate(55 53) scale(0.27)">
          <ChromeDisc />
        </g>
      </svg>
      {/* Trash */}
      <svg className="-mb-[4px] ml-[23px] shrink-0" width="66" height="86" viewBox="0 0 66 86">
        <defs>
          <linearGradient id="bin" x1="0" y1="0" x2="1" y2="0">
            <stop offset="0" stopColor="#dfe3e2" />
            <stop offset="0.300" stopColor="#c9cecc" />
            <stop offset="0.700" stopColor="#d8dcda" />
            <stop offset="1" stopColor="#c3cbc8" />
          </linearGradient>
        </defs>
        <ellipse cx="33" cy="12" rx="31" ry="8" fill="#9fa7a5" />
        <path d="M4 12 L14 4 L22 8 L24 1 L33 7 L42 2 L48 6 L58 6 L62 13 L52 22 H14 Z" fill="#e9eaea" />
        <path d="M9 13 L18 6 L23 16 Z M34 11 L44 4 L43 19 Z M50 11 L59 8 L55 19 Z M26 17 L32 10 L34 19 Z" fill="#4b4f55" />
        <path d="M19 11 L28 9 L26 14 Z" fill="#4cc3c9" />
        <path d="M44 14 L50 13 L48 18 Z" fill="#d98b3a" />
        <path d="M1 12 C8 21 58 21 65 12 L58 76 C57 83 52 85 33 85 C14 85 9 83 8 76 Z" fill="url(#bin)" opacity="0.93" />
        <path d="M1 12 C8 21 58 21 65 12" fill="none" stroke="#f5f7f6" strokeWidth="1.500" />
        <path d="M9 74 C14 81 52 81 57 74 L56 80 C52 85 14 85 10 80 Z" fill="#eef1f0" opacity="0.8" />
      </svg>
      {/* Running indicators */}
      <span className="absolute top-[106px] left-[48px] size-[8px] rounded-full bg-[#06122e]" />
      <span className="absolute top-[106px] left-[246px] size-[8px] rounded-full bg-[#062a52]" />
      <span className="absolute top-[106px] left-[1430px] size-[8px] rounded-full bg-[#061517]" />
      <span className="absolute top-[106px] left-[2544px] size-[8px] rounded-full bg-[#044a3c]" />
    </div>
  );
}

function DockTooltip() {
  return (
    <div className="absolute top-[1728px] left-[1936px] flex flex-col items-center drop-shadow-[0_1px_4px_rgba(0,0,0,0.4)]">
      <div className="flex h-[52px] w-[200px] items-center justify-center rounded-[8px] bg-[#94d2d3] pr-px font-['Inter',sans-serif] text-[27px] leading-none text-[#16282a]">
        Screenshot
      </div>
      <svg className="-mt-px" width="36" height="18" viewBox="0 0 36 18">
        <path d="M0 0 H36 C30 0 28 3 25 8 L20 16 Q18 19 16 16 L11 8 C8 3 6 0 0 0 Z" fill="#94d2d3" />
      </svg>
    </div>
  );
}

export default function App() {
  return (
    <div className="relative flex h-[1964px] w-[3024px] flex-col overflow-hidden bg-black pt-[74px]">
      <TabStrip />
      <div className="bg-[#1d211c]">
        <div className="rounded-t-[20px] bg-[#393d36]">
          <Toolbar />
          <BookmarksBar />
        </div>
      </div>
      <Desktop />
      <Dock />
      <DockTooltip />
    </div>
  );
}
